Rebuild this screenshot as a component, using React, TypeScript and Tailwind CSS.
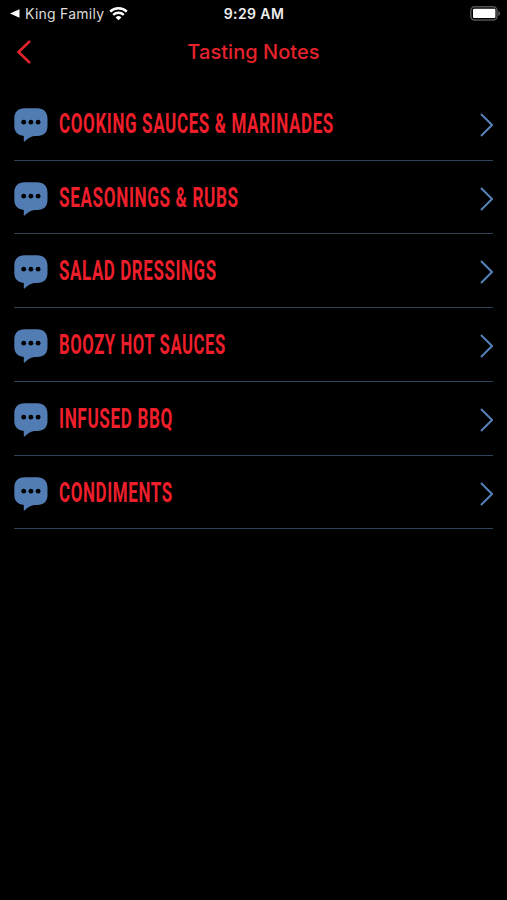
const categories = [
  { name: 'COOKING SAUCES & MARINADES', fit: 'scale-x-[0.629]' },
  { name: 'SEASONINGS & RUBS', fit: 'scale-x-[0.634]' },
  { name: 'SALAD DRESSINGS', fit: 'scale-x-[0.625]' },
  { name: 'BOOZY HOT SAUCES', fit: 'scale-x-[0.615]' },
  { name: 'INFUSED BBQ', fit: 'scale-x-[0.634]' },
  { name: 'CONDIMENTS', fit: 'scale-x-[0.627]' },
];

const WifiIcon = () => (
  <svg viewBox="0 0 19 14" className="ml-[5px] h-[14px] w-[19px] text-white" fill="none" stroke="currentColor">
    <path d="M1.2 4.6a12 12 0 0 1 16.6 0" strokeWidth="2.5" />
    <path d="M4.2 7.9a7.6 7.6 0 0 1 10.6 0" strokeWidth="2.3" />
    <path d="M9.5 13.2 6.6 10.4a4.2 4.2 0 0 1 5.8 0z" fill="currentColor" stroke="none" />
  </svg>
);

const BatteryIcon = () => (
  <svg viewBox="0 0 31 15" className="h-[15px] w-[31px]">
    <rect x="0.8" y="0.8" width="26.2" height="13.2" rx="3.8" fill="none" stroke="#545456" strokeWidth="1.5" />
    <rect x="3" y="2.7" width="22.4" height="9.4" rx="1" fill="#fff" />
    <path d="M28.2 5v5c1.3-.4 2-1.4 2-2.5s-.7-2.1-2-2.5z" fill="#545456" />
  </svg>
);

const ChatIcon = () => (
  <svg viewBox="0 0 34 34" className="h-[34px] w-[34px] shrink-0">
    <path
      d="M10.5.3h12.5c6.7 0 10.5 3.8 10.5 10.2v7.5c0 6.6-3.8 10-10.3 10h-2.4c-3.9 0-7.2 2.5-10.3 5.5-.3.3-.7.1-.7-.3v-5.3C3.7 27.4.3 23.9.3 18v-7.5C.3 4.1 4 .3 10.5.3z"
      fill="#527cb4"
    />
    <circle cx="9.7" cy="14.2" r="2.4" />
    <circle cx="16.9" cy="14.2" r="2.4" />
    <circle cx="24.1" cy="14.2" r="2.4" />
  </svg>
);

const StatusBar = () => (
  <div className="grid h-[27px] grid-cols-3 items-center pl-[7px] pr-[6px] text-white">
    <div className="flex items-center pl-[3px]">
      <svg viewBox="0 0 10 9" className="mr-[5px] h-[9px] w-[10px]">
        <path d="M9.5 .2v8.600L0 4.500z" fill="currentColor" />
      </svg>
      <span className="whitespace-nowrap text-[14px] tracking-[0.25px] text-[#dddddd]">King Family</span>
      <WifiIcon />
    </div>
    <span className="text-center text-[14px] font-semibold tracking-[0.4px] text-[#eeeeee]">9:29 AM</span>
    <div className="flex justify-end">
      <BatteryIcon />
    </div>
  </div>
);

const App = () => {
  return (
    <div className="flex min-h-screen flex-col bg-black font-['Inter',sans-serif]">
      <StatusBar />

      <header className="grid h-[60px] grid-cols-3 items-start px-4">
        <button aria-label="Back" className="mt-[13px] w-4">
          <svg viewBox="0 0 16 24" className="h-6 w-4" fill="none" stroke="#e5232c" strokeWidth="2.5">
            <path d="M14 1 2.5 12 14 23" />
          </svg>
        </button>
        <h1 className="mt-[10px] whitespace-nowrap text-center text-[20px] font-medium leading-[30px] tracking-[0.05px] text-[#e5232c]">
          Tasting Notes
        </h1>
      </header>

      <ul className="px-[14px]">
        {categories.map((category) => (
          <li key={category.name} className="flex h-[73.74px] items-start border-b border-[#2b4258] pt-[21px]">
            <ChatIcon />
            <div className="ml-[11px] mt-px w-0 flex-1">
              <span
                className={`inline-block origin-left whitespace-nowrap font-['Roboto',sans-serif] text-[27px] font-bold leading-[31px] tracking-[1px] text-[#ee1f2b] ${category.fit}`}
              >
                {category.name}
              </span>
            </div>
            <svg
              viewBox="0 0 14 24"
              className="mt-[5px] h-6 w-[14px] shrink-0"
              fill="none"
              stroke="#5580b8"
              strokeWidth="2"
            >
              <path d="M2 1 13 12 2 23" />
            </svg>
          </li>
        ))}
      </ul>
    </div>
  );
};

export default App;
